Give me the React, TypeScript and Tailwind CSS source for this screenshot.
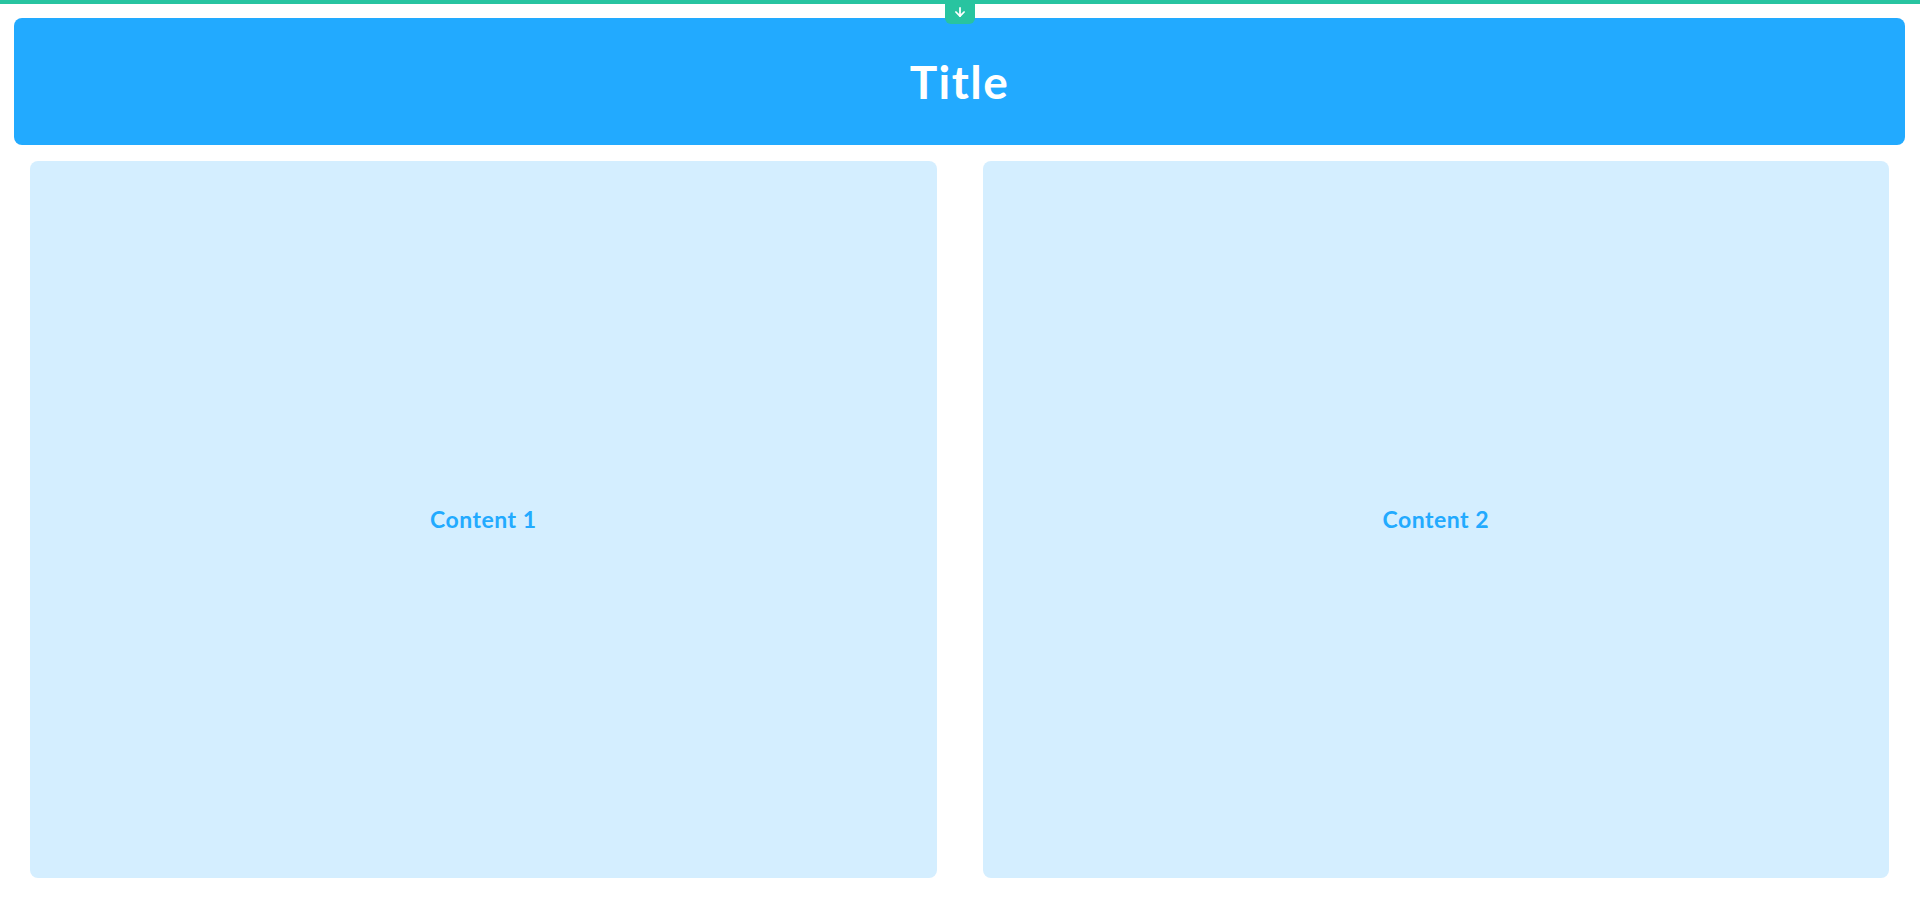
import React from "react";
import { ArrowDown } from "lucide-react";

export default function App() {
  return (
    <div className="relative h-[909px] w-full bg-white flex flex-col" style={{ fontFamily: "Lato, 'Noto Sans', sans-serif" }}>
      <div className="h-[4px] w-full bg-[#28c4a0]" />
      <div className="absolute left-1/2 top-0 -translate-x-1/2 w-[30px] h-[24px] bg-[#28c4a0] rounded-b-[6px] flex items-center justify-center">
        <ArrowDown className="text-white" size={14} strokeWidth={3} />
      </div>
      <div className="mt-[14px] ml-[14px] mr-[15px] h-[127px] rounded-[8px] bg-[#22aaff] flex items-center justify-center">
        <span className="text-white text-[46px] font-bold tracking-[1.5px]">Title</span>
      </div>
      <div className="mt-[16px] ml-[30px] mr-[31px] h-[717px] flex gap-[46px]">
        <div className="flex-1 rounded-[8px] bg-[#d4eeff] flex items-center justify-center">
          <span className="text-[#22aaff] text-[23px] font-bold tracking-[0.5px]">Content 1</span>
        </div>
        <div className="flex-1 rounded-[8px] bg-[#d4eeff] flex items-center justify-center">
          <span className="text-[#22aaff] text-[23px] font-bold tracking-[0.5px]">Content 2</span>
        </div>
      </div>
    </div>
  );
}
